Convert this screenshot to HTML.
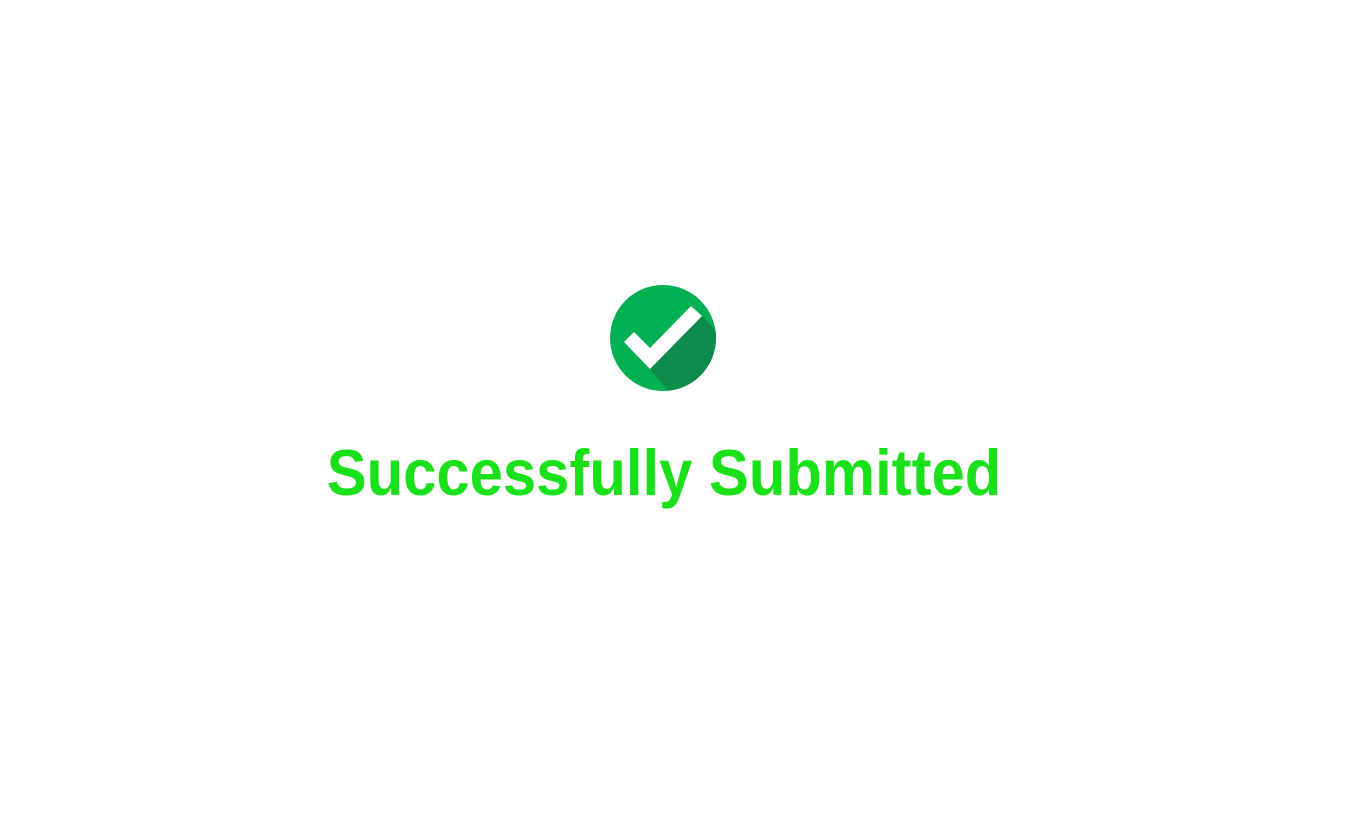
<!DOCTYPE html>
<html><head><meta charset="utf-8"><style>
html,body{margin:0;padding:0;background:#fff;width:1357px;height:838px;overflow:hidden}
svg{position:absolute;left:609px;top:284px}
.t{position:absolute;left:664px;top:435px;transform:translateX(-50%) scaleX(0.92);white-space:nowrap;
font-family:"Liberation Sans",sans-serif;font-weight:bold;font-size:65px;line-height:76px;color:#1ae01a}
</style></head><body>
<svg width="108" height="108" viewBox="0 0 108 108">
<defs><clipPath id="c"><circle cx="54" cy="54" r="53"/></clipPath></defs>
<circle cx="54" cy="54" r="53" fill="#03b051"/>
<polygon clip-path="url(#c)" points="41,85 93,32 130,70 120,120 70,120" fill="#0e8a4a"/>
<polygon points="15,58 25,48 41,64 82,22 93,32 41,85" fill="#fff"/>
</svg>
<div class="t">Successfully Submitted</div>
</body></html>
